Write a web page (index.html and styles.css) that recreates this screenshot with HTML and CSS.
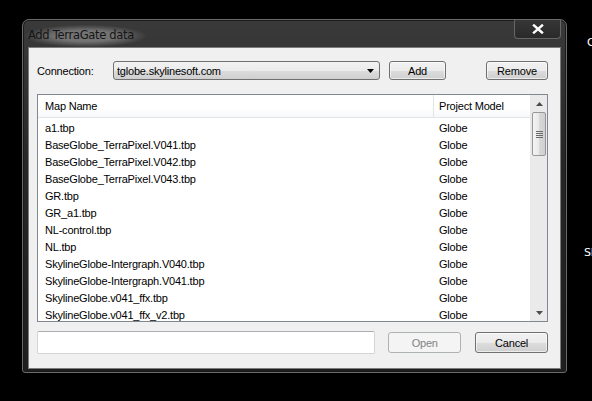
FILE: index.html
```html
<!DOCTYPE html>
<html>
<head>
<meta charset="utf-8">
<link rel="stylesheet" href="styles.css">
</head>
<body>
<div class="desktop">
  <div class="window">
    <div class="titlebar">
      <span class="title">Add TerraGate data</span>
      <div class="close"><svg width="12" height="10" viewBox="0 0 12 10"><path d="M2 1.5 L10 8.5 M10 1.5 L2 8.5" stroke="#fff" stroke-width="2.4" stroke-linecap="square"/></svg></div>
    </div>
    <div class="client">
      <div class="toprow">
        <span class="label">Connection:</span>
        <div class="combo"><span>tglobe.skylinesoft.com</span><svg class="arrow" width="7" height="4" viewBox="0 0 7 4"><path d="M0 0 H7 L3.5 4 Z" fill="#000"/></svg></div>
        <button class="btn add">Add</button>
        <span class="spacer"></span>
        <button class="btn remove">Remove</button>
      </div>
      <div class="list">
        <div class="table">
          <div class="header">
            <div class="col1">Map Name</div>
            <div class="col2">Project Model</div>
          </div>
          <div class="rows">
            <div class="row"><div class="col1">a1.tbp</div><div class="col2">Globe</div></div>
            <div class="row"><div class="col1">BaseGlobe_TerraPixel.V041.tbp</div><div class="col2">Globe</div></div>
            <div class="row"><div class="col1">BaseGlobe_TerraPixel.V042.tbp</div><div class="col2">Globe</div></div>
            <div class="row"><div class="col1">BaseGlobe_TerraPixel.V043.tbp</div><div class="col2">Globe</div></div>
            <div class="row"><div class="col1">GR.tbp</div><div class="col2">Globe</div></div>
            <div class="row"><div class="col1">GR_a1.tbp</div><div class="col2">Globe</div></div>
            <div class="row"><div class="col1">NL-control.tbp</div><div class="col2">Globe</div></div>
            <div class="row"><div class="col1">NL.tbp</div><div class="col2">Globe</div></div>
            <div class="row"><div class="col1">SkylineGlobe-Intergraph.V040.tbp</div><div class="col2">Globe</div></div>
            <div class="row"><div class="col1">SkylineGlobe-Intergraph.V041.tbp</div><div class="col2">Globe</div></div>
            <div class="row"><div class="col1">SkylineGlobe.v041_ffx.tbp</div><div class="col2">Globe</div></div>
            <div class="row"><div class="col1">SkylineGlobe.v041_ffx_v2.tbp</div><div class="col2">Globe</div></div>
          </div>
        </div>
        <div class="scrollbar">
          <div class="sb-btn"><svg width="7" height="4" viewBox="0 0 7 4"><path d="M0 4 H7 L3.5 0 Z" fill="#4d4d4d"/></svg></div>
          <div class="thumb"><span></span><span></span><span></span><span></span></div>
          <div class="track"></div>
          <div class="sb-btn"><svg width="7" height="4" viewBox="0 0 7 4"><path d="M0 0 H7 L3.5 4 Z" fill="#4d4d4d"/></svg></div>
        </div>
      </div>
      <div class="bottomrow">
        <div class="field"></div>
        <button class="btn open" disabled>Open</button>
        <button class="btn cancel">Cancel</button>
      </div>
    </div>
  </div>
  <span class="edge edge-c">C</span>
  <span class="edge edge-s">Sl</span>
</div>
</body>
</html>
```

FILE: styles.css
```css
* { box-sizing: border-box; }
html, body { margin: 0; padding: 0; background: #000; }
.desktop {
  position: relative;
  width: 592px;
  height: 401px;
  overflow: hidden;
  padding: 19px 0 0 22px;
  background: #000;
  font-family: "Liberation Sans", Arial, sans-serif;
  font-size: 11px;
  letter-spacing: -0.2px;
  color: #000;
}
.window {
  width: 545px;
  height: 354px;
  border: 1px solid #6a6a6a;
  border-radius: 7px 7px 3px 3px;
  background: linear-gradient(#3a3a3a, #262626 40%, #1e1e1e);
  box-shadow: inset 0 0 0 1px #1a1a1a;
  padding: 0 5px 5px 5px;
  display: flex;
  flex-direction: column;
}
.titlebar {
  height: 27px;
  display: flex;
  align-items: flex-start;
  position: relative;
}
.title {
  margin: 5px 0 0 -3px;
  font-family: "DejaVu Sans", sans-serif;
  font-size: 11.5px;
  letter-spacing: -0.3px;
  color: #151515;
  background: radial-gradient(ellipse at center, rgba(140,140,140,0.7) 35%, rgba(100,100,100,0) 72%);
  padding: 3px 12px 5px 3px;
}
.close {
  position: absolute;
  right: 0;
  top: 0;
  width: 47px;
  height: 19px;
  border: 1px solid #666;
  border-top: none;
  border-radius: 0 0 4px 4px;
  background: linear-gradient(#363636, #2a2a2a);
  display: flex;
  align-items: center;
  justify-content: center;
}
.client {
  flex: 1;
  background: #f0f0f0;
  border: 1px solid #7c7c7c;
  padding: 13px 12px 14px 8px;
  display: flex;
  flex-direction: column;
}
.toprow {
  display: flex;
  align-items: center;
  height: 19px;
}
.label { width: 76px; }
.combo {
  width: 267px;
  height: 19px;
  border: 1px solid #707070;
  border-radius: 3px;
  background: linear-gradient(#f2f2f2 0%, #ebebeb 50%, #dddddd 51%, #cfcfcf 100%);
  display: flex;
  align-items: center;
  padding: 0 5px 0 3px;
  justify-content: space-between;
}
.btn {
  font-family: "Liberation Sans", Arial, sans-serif;
  font-size: 11px;
  letter-spacing: -0.2px;
  color: #000;
  height: 19px;
  border: 1px solid #707070;
  border-radius: 3px;
  background: linear-gradient(#f2f2f2 0%, #ebebeb 50%, #dddddd 51%, #cfcfcf 100%);
  box-shadow: inset 0 0 0 1px rgba(255,255,255,0.6);
  padding: 0;
}
.add { width: 57px; margin-left: 9px; }
.spacer { flex: 1; }
.remove { width: 62px; }
.list {
  margin-top: 14px;
  height: 228px;
  border: 1px solid #828790;
  background: #fff;
  display: flex;
  overflow: hidden;
}
.table { flex: 1; overflow: hidden; }
.header {
  display: flex;
  height: 23px;
  align-items: center;
  border-bottom: 1px solid #e5e5e5;
  background: linear-gradient(#fff, #fff 60%, #f7f8fa);
}
.header .col1 { border-right: 1px solid #e3e4e6; height: 100%; display: flex; align-items: center; }
.col1 { width: 396px; padding-left: 7px; }
.col2 { padding-left: 5px; }
.rows { padding-top: 1px; }
.row { display: flex; height: 17px; align-items: center; }
.scrollbar {
  width: 17px;
  background: #eaeaea;
  border-left: 1px solid #e8e8e8;
  display: flex;
  flex-direction: column;
}
.sb-btn {
  height: 17px;
  display: flex;
  align-items: center;
  justify-content: center;
}
.thumb {
  height: 44px;
  margin: 0 1px;
  border: 1px solid #979797;
  border-radius: 2px;
  background: linear-gradient(90deg, #f4f4f4, #e8e8e8 50%, #d9d9d9 51%, #cfcfcf);
  display: flex;
  flex-direction: column;
  align-items: center;
  justify-content: center;
  gap: 1px;
}
.thumb span { width: 7px; height: 1px; background: #6a6a6a; }
.track { flex: 1; }
.bottomrow {
  margin-top: 9px;
  display: flex;
  align-items: center;
  height: 23px;
}
.field {
  width: 339px;
  height: 23px;
  border: 1px solid #d4d4d4;
  border-top-color: #abadb3;
  background: #fff;
  border-radius: 2px;
}
.open {
  width: 73px;
  height: 21px;
  margin-left: 13px;
  border-color: #adb2b5;
  background: #f4f4f4;
  color: #838383;
  box-shadow: none;
}
.cancel { width: 73px; height: 21px; margin-left: 14px; }
.edge {
  position: absolute;
  color: #fff;
  font-family: "DejaVu Sans", sans-serif;
  font-size: 11px;
}
.edge-c { left: 587px; top: 36px; }
.edge-s { left: 584px; top: 246px; }
```
